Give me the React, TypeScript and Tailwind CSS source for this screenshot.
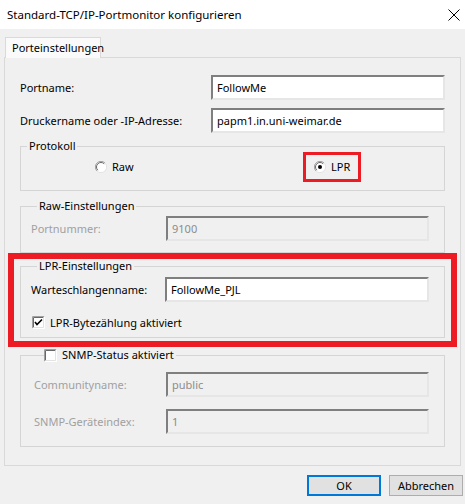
import React from 'react';

const Radio = ({ checked }: { checked?: boolean }) => (
  <svg width="12" height="12" viewBox="0 0 12 12" className="shrink-0">
    <circle cx="6" cy="6" r="5.5" fill="#ffffff" />
    <path d="M10 2 A5.5 5.5 0 0 0 2 10" fill="none" stroke="#a0a0a0" strokeWidth="1" />
    <path d="M9.2 2.8 A4.5 4.5 0 0 0 2.8 9.2" fill="none" stroke="#696969" strokeWidth="1" />
    <path d="M10 2 A5.5 5.5 0 0 1 2 10" fill="none" stroke="#e3e3e3" strokeWidth="1" />
    {checked && <circle cx="6" cy="6" r="2" fill="#000000" />}
  </svg>
);

const Check = ({ checked }: { checked?: boolean }) => (
  <svg width="13" height="13" viewBox="0 0 13 13" className="shrink-0">
    <rect x="0" y="0" width="13" height="13" fill="#ffffff" />
    <path d="M0.5 12.5 V0.5 H12.5" fill="none" stroke="#a0a0a0" />
    <path d="M1.5 11.5 V1.5 H11.5" fill="none" stroke="#696969" />
    <path d="M0.5 12.5 H12.5 V0.5" fill="none" stroke="#ffffff" />
    <path d="M1.5 11.5 H11.5 V1.5" fill="none" stroke="#e3e3e3" />
    {checked && <path d="M3 6 L5 8.5 L10 3.5" fill="none" stroke="#000" strokeWidth="1.6" />}
  </svg>
);

const Edit = ({ value, disabled, w }: { value: string; disabled?: boolean; w: string }) => (
  <div
    className={`${w} h-[25px] flex items-center pl-[4px] border-2 border-t-[#7f7f7f] border-l-[#7f7f7f] border-r-[#e6e6e6] border-b-[#e6e6e6] ${
      disabled ? 'bg-[#f0f0f0] text-[#8c8c8c]' : 'bg-white text-black'
    }`}
  >
    {value}
  </div>
);

const App = () => {
  return (
    <div
      className="w-[465px] h-[504px] bg-[#f0f0f0] text-[11px] leading-[14px] text-black overflow-hidden"
      style={{ fontFamily: '"Noto Sans", "Segoe UI", sans-serif' }}
    >
      {/* Title bar */}
      <div className="h-[29px] bg-white flex items-center justify-between pl-[7px] pr-[5px]">
        <span className="text-[11.5px]">Standard-TCP/IP-Portmonitor konfigurieren</span>
        <svg width="12" height="12" viewBox="0 0 12 12">
          <path d="M0.5 0.5 L11.5 11.5 M11.5 0.5 L0.5 11.5" stroke="#000" strokeWidth="1" />
        </svg>
      </div>

      <div className="px-[4px] pt-[8px]">
        {/* Tab */}
        <div className="ml-[1px] w-[96px] h-[21px] -mb-px relative z-10 flex items-center pl-[6px] bg-[#fafafa] border border-b-0 border-[#d9d9d9]">
          Porteinstellungen
        </div>

        {/* Panel */}
        <div className="w-[457px] border border-[#d9d9d9] bg-[#f0f0f0] px-[15px] pt-[17px] pb-[18px]">
          <div className="flex items-center justify-between">
            <span>Portname:</span>
            <Edit value="FollowMe" w="w-[234px]" />
          </div>
          <div className="flex items-center justify-between mt-[8px]">
            <span>Druckername oder -IP-Adresse:</span>
            <Edit value="papm1.in.uni-weimar.de" w="w-[234px]" />
          </div>

          {/* Protokoll */}
          <fieldset className="mt-[6px] border border-[#d5d5d5] pb-[16px] pt-[7px]">
            <legend className="ml-[6px] px-[2px] leading-[14px]">Protokoll</legend>
            <div className="flex items-center h-[14px]">
              <div className="flex items-center gap-[5px] ml-[74px] w-[208px]">
                <Radio />
                <span>Raw</span>
              </div>
              <div className="-my-[8px] border-[3px] border-[#ed1c24] w-[58px] h-[30px] pl-[8px] flex items-center gap-[5px]">
                <Radio checked />
                <span>LPR</span>
              </div>
            </div>
          </fieldset>

          {/* Raw */}
          <fieldset className="mt-[8px] border border-[#d5d5d5] pt-[3px] pb-[11px] pl-[10px] pr-[15px]">
            <legend className="ml-[6px] px-[2px] leading-[14px]">Raw-Einstellungen</legend>
            <div className="flex items-center justify-between">
              <span className="text-[#a0a0a0]">Portnummer:</span>
              <Edit value="9100" disabled w="w-[263px]" />
            </div>
          </fieldset>

          {/* LPR highlighted */}
          <div className="-mx-[12px] border-[6px] border-[#ed1c24] px-[6px] pb-[3px]">
            <fieldset className="border border-[#d5d5d5] pt-[4px] pb-[8px] pl-[10px] pr-[15px]">
              <legend className="ml-[6px] px-[2px] leading-[14px]">LPR-Einstellungen</legend>
              <div className="flex items-center justify-between">
                <span>Warteschlangenname:</span>
                <Edit value="FollowMe_PJL" w="w-[264px]" />
              </div>
              <div className="flex items-center gap-[5px] mt-[14px] ml-[1px] h-[13px]">
                <Check checked />
                <span>LPR-Bytezählung aktiviert</span>
              </div>
            </fieldset>
          </div>

          {/* SNMP */}
          <fieldset className="mt-[1px] border border-[#d5d5d5] pt-[10px] pb-[12px] pl-[13px] pr-[15px]">
            <legend className="ml-[10px] pr-[2px] leading-[14px] flex items-center gap-[5px]">
              <Check />
              <span>SNMP-Status aktiviert</span>
            </legend>
            <div className="flex items-center justify-between">
              <span className="text-[#a0a0a0]">Communityname:</span>
              <Edit value="public" disabled w="w-[263px]" />
            </div>
            <div className="flex items-center justify-between mt-[12px]">
              <span className="text-[#a0a0a0]">SNMP-Geräteindex:</span>
              <Edit value="1" disabled w="w-[263px]" />
            </div>
          </fieldset>
        </div>

        {/* Buttons */}
        <div className="flex justify-end gap-[8px] mt-[9px] -mr-[2px]">
          <button className="w-[74px] h-[21px] bg-[#e1e1e1] border-2 border-[#0078d7]">OK</button>
          <button className="w-[74px] h-[21px] bg-[#e1e1e1] border border-[#adadad]">Abbrechen</button>
        </div>
      </div>
    </div>
  );
};

export default App;
